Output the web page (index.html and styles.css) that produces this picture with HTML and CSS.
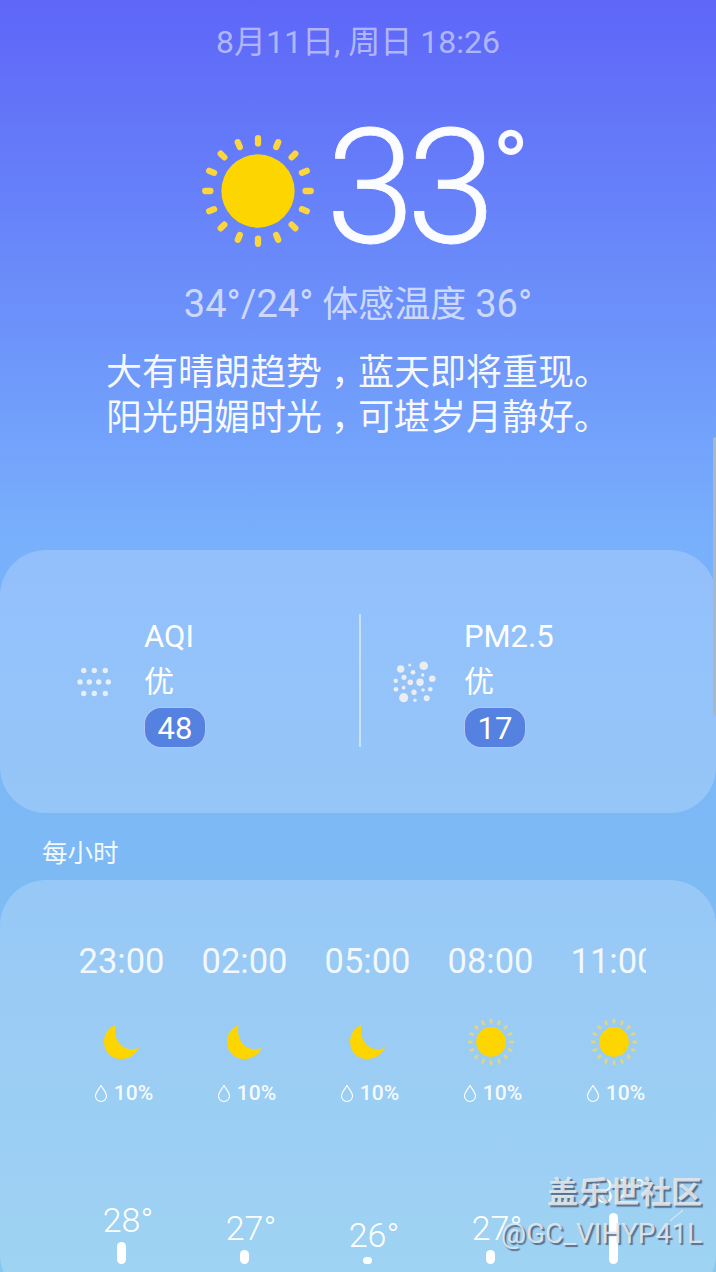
FILE: index.html
```html
<!DOCTYPE html>
<html lang="zh">
  <head>
    <title>天气</title>
    <meta charset="UTF-8">
    <meta name="viewport" content="width=device-width, initial-scale=1.0">
    <link rel="stylesheet" href="styles.css">
  </head>

  <body>
    <svg class="defs" width="0" height="0">
      <defs>
        <g id="rays" stroke-linecap="round">
          <line x1="50" y1="4.5" x2="50" y2="9" />
          <line x1="50" y1="4.5" x2="50" y2="9" transform="rotate(22.5 50 50)" />
          <line x1="50" y1="4.5" x2="50" y2="9" transform="rotate(45 50 50)" />
          <line x1="50" y1="4.5" x2="50" y2="9" transform="rotate(67.5 50 50)" />
          <line x1="50" y1="4.5" x2="50" y2="9" transform="rotate(90 50 50)" />
          <line x1="50" y1="4.5" x2="50" y2="9" transform="rotate(112.5 50 50)" />
          <line x1="50" y1="4.5" x2="50" y2="9" transform="rotate(135 50 50)" />
          <line x1="50" y1="4.5" x2="50" y2="9" transform="rotate(157.5 50 50)" />
          <line x1="50" y1="4.5" x2="50" y2="9" transform="rotate(180 50 50)" />
          <line x1="50" y1="4.5" x2="50" y2="9" transform="rotate(202.5 50 50)" />
          <line x1="50" y1="4.5" x2="50" y2="9" transform="rotate(225 50 50)" />
          <line x1="50" y1="4.5" x2="50" y2="9" transform="rotate(247.5 50 50)" />
          <line x1="50" y1="4.5" x2="50" y2="9" transform="rotate(270 50 50)" />
          <line x1="50" y1="4.5" x2="50" y2="9" transform="rotate(292.5 50 50)" />
          <line x1="50" y1="4.5" x2="50" y2="9" transform="rotate(315 50 50)" />
          <line x1="50" y1="4.5" x2="50" y2="9" transform="rotate(337.5 50 50)" />
        </g>
        <g id="small-sun">
          <use href="#rays" stroke="#dcd685" stroke-width="6" />
          <circle cx="50" cy="50" r="31" fill="#fdd500" />
        </g>
        <path id="moon" d="M11.5 1 C4 4 0 11 0 18 C0 28 8 35 17 35 C25 35 31 31 35 24 C29 26 23 25.5 18 22 C12 17 10 9 11.5 1 Z" fill="#fdd500" />
        <path id="drop" d="M7 1.5 C5 5 1.5 8.5 1.5 12 C1.5 15.2 4 17.5 7 17.5 C10 17.5 12.5 15.2 12.5 12 C12.5 8.5 9 5 7 1.5 Z" fill="none" stroke="#fff" stroke-width="1.1" />
      </defs>
    </svg>

    <div class="page">
      <div class="date">8月11日, 周日 18:26</div>

      <div class="current">
        <svg class="big-sun" viewBox="0 0 100 100">
          <use href="#rays" stroke="#fdd53c" stroke-width="5.4" />
          <circle cx="50" cy="50" r="31.6" fill="#fdd500" />
        </svg>
        <div class="big-temp">33<span class="big-deg">°</span></div>
      </div>

      <div class="range"><span class="range-num">34°/24°</span> 体感温度 <span class="range-num">36°</span></div>

      <p class="message">大有晴朗趋势<span class="comma">，</span>蓝天即将重现。<br>阳光明媚时光<span class="comma">，</span>可堪岁月静好。</p>

      <div class="card air-card">
        <div class="air-item">
          <svg class="air-icon" viewBox="0 0 44 44">
            <g fill="#e6eef6">
              <circle cx="7.7" cy="10.5" r="2.7" /><circle cx="18.3" cy="10.5" r="2.7" /><circle cx="29.3" cy="10.5" r="2.7" />
              <circle cx="4" cy="22" r="2.7" /><circle cx="13.3" cy="22" r="2.7" /><circle cx="22.7" cy="22" r="2.7" /><circle cx="32.3" cy="22" r="2.7" />
              <circle cx="7.7" cy="33.5" r="2.7" /><circle cx="18.3" cy="33.5" r="2.7" /><circle cx="29.3" cy="33.5" r="2.7" />
            </g>
          </svg>
          <div class="air-text">
            <div class="air-name">AQI</div>
            <div class="air-level">优</div>
            <div class="air-badge">48</div>
          </div>
        </div>

        <div class="air-divider"></div>

        <div class="air-item">
          <svg class="air-icon" viewBox="0 0 44 42">
            <g fill="#ebedf0">
              <circle cx="7.7" cy="8" r="3.7" /><circle cx="16.7" cy="4" r="1.5" /><circle cx="30.7" cy="4.7" r="4.3" />
              <circle cx="20" cy="11.3" r="2.4" /><circle cx="11" cy="16.3" r="2.6" /><circle cx="29.7" cy="14" r="1.7" /><circle cx="39.3" cy="17.7" r="3.3" />
              <circle cx="17.3" cy="21.3" r="2.8" /><circle cx="27" cy="21.3" r="3.7" /><circle cx="2.7" cy="19.7" r="2.2" />
              <circle cx="10.7" cy="26.7" r="1.9" /><circle cx="3" cy="28.3" r="2.4" /><circle cx="21" cy="31.3" r="2.7" /><circle cx="30" cy="29" r="1.8" /><circle cx="37.3" cy="28.3" r="2.3" />
              <circle cx="10.7" cy="36.7" r="4.6" /><circle cx="22" cy="39.3" r="1.7" /><circle cx="33.7" cy="37.3" r="3" />
            </g>
          </svg>
          <div class="air-text">
            <div class="air-name">PM2.5</div>
            <div class="air-level">优</div>
            <div class="air-badge">17</div>
          </div>
        </div>
      </div>

      <h2 class="section-title">每小时</h2>

      <div class="card hourly-card">
        <div class="hours">
          <div class="hour">
            <div class="hour-time">23:00</div>
            <svg class="hour-icon moon-icon" viewBox="0 0 36 36"><use href="#moon" /></svg>
            <div class="hour-rain"><svg class="drop-icon" viewBox="0 0 14 19"><use href="#drop" /></svg>10%</div>
          </div>
          <div class="hour">
            <div class="hour-time">02:00</div>
            <svg class="hour-icon moon-icon" viewBox="0 0 36 36"><use href="#moon" /></svg>
            <div class="hour-rain"><svg class="drop-icon" viewBox="0 0 14 19"><use href="#drop" /></svg>10%</div>
          </div>
          <div class="hour">
            <div class="hour-time">05:00</div>
            <svg class="hour-icon moon-icon" viewBox="0 0 36 36"><use href="#moon" /></svg>
            <div class="hour-rain"><svg class="drop-icon" viewBox="0 0 14 19"><use href="#drop" /></svg>10%</div>
          </div>
          <div class="hour">
            <div class="hour-time">08:00</div>
            <svg class="hour-icon" viewBox="0 0 100 100"><use href="#small-sun" /></svg>
            <div class="hour-rain"><svg class="drop-icon" viewBox="0 0 14 19"><use href="#drop" /></svg>10%</div>
          </div>
          <div class="hour">
            <div class="hour-time">11:00</div>
            <svg class="hour-icon" viewBox="0 0 100 100"><use href="#small-sun" /></svg>
            <div class="hour-rain"><svg class="drop-icon" viewBox="0 0 14 19"><use href="#drop" /></svg>10%</div>
          </div>
        </div>

        <div class="chart">
          <div class="chart-col"><div class="chart-temp">28°</div><div class="chart-bar" style="height: 22px"></div></div>
          <div class="chart-col"><div class="chart-temp">27°</div><div class="chart-bar" style="height: 14px"></div></div>
          <div class="chart-col"><div class="chart-temp">26°</div><div class="chart-bar" style="height: 7px"></div></div>
          <div class="chart-col"><div class="chart-temp">27°</div><div class="chart-bar" style="height: 14px"></div></div>
          <div class="chart-col"><div class="chart-temp">32°</div><div class="chart-bar" style="height: 51px"></div></div>
        </div>
      </div>

      <div class="scroll-thumb"></div>
      <div class="stray-line"></div>

      <div class="watermark">
        <div class="watermark-name">盖乐世社区</div>
        <div class="watermark-user">@GC_VIHYP41L</div>
      </div>
    </div>
  </body>
</html>
```

FILE: styles.css
```css
html, body {
  margin: 0;
  padding: 0;
}

body {
  width: 716px;
  height: 1272px;
  overflow: hidden;
  font-family: Roboto, "Noto Sans CJK SC", sans-serif;
  color: #fff;
}

.defs {
  position: absolute;
}

.page {
  position: relative;
  height: 1272px;
  overflow: hidden;
  background: linear-gradient(180deg, #5e66f8 0%, #6b8ffa 23.6%, #78b0fc 42.5%, #7dbaf5 67.6%, #87c8ef 100%);
}

.date {
  padding-top: 22px;
  height: 40px;
  line-height: 40px;
  font-size: 32px;
  text-align: center;
  color: rgba(255, 255, 255, 0.52);
}

.current {
  display: flex;
  align-items: flex-start;
  height: 184px;
  padding-top: 41px;
  padding-left: 200px;
}

.big-sun {
  width: 116px;
  height: 116px;
  margin-top: 30px;
}

.big-temp {
  position: relative;
  margin-left: 10px;
  font-size: 160px;
  line-height: 170px;
  font-weight: 300;
  letter-spacing: -8px;
  color: #fbfcff;
  -webkit-text-stroke: 0.8px #fbfcff;
}

.big-deg {
  position: absolute;
  top: -20px;
  left: 166px;
  font-size: 100px;
  font-weight: 400;
  letter-spacing: 0;
  -webkit-text-stroke: 0;
}

.range {
  margin-top: -5px;
  height: 44px;
  line-height: 44px;
  font-size: 36px;
  text-align: center;
  color: rgba(255, 255, 255, 0.68);
}

.range-num {
  font-size: 38px;
}

.message {
  margin: 25px 0 0 0;
  font-size: 36px;
  line-height: 45px;
  text-align: center;
  color: rgba(255, 255, 255, 0.95);
}

.comma {
  display: inline-block;
  transform: translateX(9px);
}

.card {
  background: rgba(255, 255, 255, 0.2);
  border-radius: 46px;
}

.air-card {
  display: flex;
  align-items: center;
  margin-top: 109px;
  height: 263px;
}

.air-item {
  flex: 1;
  display: flex;
  align-items: center;
}

.air-icon {
  width: 44px;
  height: 44px;
  margin-left: 76px;
  margin-right: 24px;
}

.air-item:last-child .air-icon {
  height: 42px;
  margin-left: 32px;
  margin-right: 27px;
}

.air-divider {
  width: 2px;
  height: 133px;
  margin-top: -2px;
  margin-left: 4px;
  background: rgba(255, 255, 255, 0.5);
}

.air-name {
  font-size: 31px;
  line-height: 44px;
}

.air-level {
  font-size: 30px;
  line-height: 46px;
}

.air-badge {
  width: 60px;
  height: 39px;
  line-height: 41px;
  margin-top: 2px;
  text-align: center;
  font-size: 31px;
  background: #5581e0;
  border: 1px solid rgba(255, 255, 255, 0.55);
  border-radius: 17px;
}

.section-title {
  margin: 22px 0 0 42px;
  height: 45px;
  line-height: 36px;
  font-size: 25.5px;
  font-weight: 400;
  color: rgba(255, 255, 255, 0.92);
}

.hourly-card {
  height: 420px;
  padding: 0 70px 0 60px;
}

.hours {
  display: flex;
  padding-top: 60px;
  overflow: hidden;
}

.hour {
  flex: 0 0 123px;
  display: flex;
  flex-direction: column;
  align-items: center;
}

.hour-time {
  height: 42px;
  line-height: 42px;
  font-size: 34.5px;
  color: rgba(255, 255, 255, 0.88);
  white-space: nowrap;
}

.hour-icon {
  width: 48px;
  height: 48px;
  margin-top: 36px;
}

.moon-icon {
  width: 36px;
  height: 36px;
  margin: 42px 0 6px 0;
}

.hour-rain {
  display: flex;
  align-items: center;
  gap: 6px;
  height: 26px;
  margin-top: 14px;
  padding-left: 4px;
  font-size: 21px;
  font-weight: 500;
  color: rgba(255, 255, 255, 0.92);
}

.drop-icon {
  width: 14px;
  height: 19px;
}

.chart {
  position: absolute;
  left: 60px;
  top: 1140px;
  display: flex;
  align-items: flex-end;
  height: 124px;
}

.chart-col {
  flex: 0 0 123px;
  display: flex;
  flex-direction: column;
  align-items: center;
}

.chart-temp {
  font-size: 34px;
  font-weight: 300;
  line-height: 38px;
  margin-bottom: 3px;
  padding-left: 13px;
}

.chart-bar {
  width: 9px;
  border-radius: 5px;
  background: #fff;
}

.scroll-thumb {
  position: absolute;
  top: 437px;
  right: 0;
  width: 3px;
  height: 279px;
  border-radius: 3px 0 0 3px;
  background: #a9b7ca;
}

.stray-line {
  position: absolute;
  left: 668px;
  top: 1215px;
  width: 17px;
  height: 1px;
  background: rgba(255, 255, 255, 0.6);
  transform: rotate(-40deg);
}

.watermark {
  position: absolute;
  right: 14px;
  top: 1172px;
  text-align: right;
  color: rgba(226, 230, 234, 0.92);
  text-shadow: 2px 2px 1px rgba(60, 80, 110, 0.75);
}

.watermark-name {
  font-size: 31px;
  font-weight: 700;
  line-height: 42px;
}

.watermark-user {
  font-size: 28px;
  line-height: 40px;
  font-weight: 400;
}
```
